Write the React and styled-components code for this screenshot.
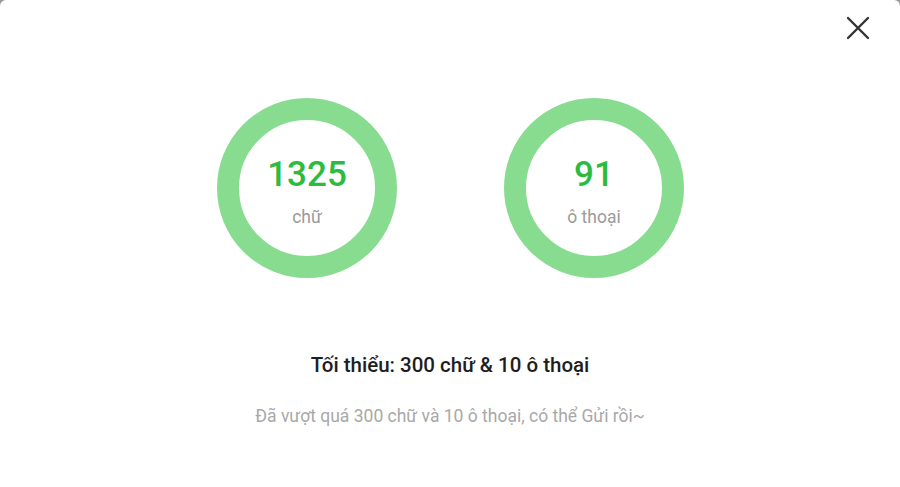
import React from "react";
import styled, { createGlobalStyle } from "styled-components";

const Global = createGlobalStyle`
  html, body { margin: 0; padding: 0; background: #9a9a9a; }
  body { font-family: Roboto, "Noto Sans", sans-serif; }
  #root { width: 900px; height: 487px; }
`;

const Modal = styled.div`
  position: relative;
  width: 900px;
  height: 487px;
  background: #fff;
  border-radius: 6px 6px 0 0;
  display: flex;
  flex-direction: column;
  align-items: center;
  box-sizing: border-box;
  padding-top: 98px;
`;

const CloseButton = styled.button`
  position: absolute;
  top: 15px;
  right: 29px;
  width: 26px;
  height: 26px;
  padding: 0;
  border: none;
  background: none;
  display: flex;
  align-items: center;
  justify-content: center;
  cursor: pointer;
`;

const Rings = styled.div`
  display: flex;
  gap: 107px;
  margin-left: 1px;
`;

const Ring = styled.div`
  width: 180px;
  height: 180px;
  box-sizing: border-box;
  border-radius: 50%;
  border: 22px solid #88dc8f;
  display: flex;
  flex-direction: column;
  align-items: center;
  justify-content: center;
`;

const Count = styled.div`
  font-size: 35px;
  font-weight: 500;
  color: #2dbb3f;
  line-height: 40px;
  margin-top: 6px;
`;

const Unit = styled.div`
  font-size: 17.5px;
  color: #9a9a9a;
  line-height: 20px;
  margin-top: 12px;
`;

const Title = styled.div`
  margin-top: 74px;
  font-size: 20.5px;
  font-weight: 500;
  color: #1e1e1e;
  line-height: 26px;
`;

const Hint = styled.div`
  margin-top: 27px;
  font-size: 17.5px;
  color: #a8a8a8;
  line-height: 22px;
`;

export default function App() {
  return (
    <>
      <Global />
      <Modal>
        <CloseButton aria-label="close">
          <svg width="24" height="24" viewBox="0 0 24 24">
            <path d="M2 2 L22 22 M22 2 L2 22" stroke="#333" strokeWidth="2.4" strokeLinecap="round" fill="none" />
          </svg>
        </CloseButton>
        <Rings>
          <Ring>
            <Count>1325</Count>
            <Unit>chữ</Unit>
          </Ring>
          <Ring>
            <Count>91</Count>
            <Unit>ô thoại</Unit>
          </Ring>
        </Rings>
        <Title>Tối thiểu: 300 chữ &amp; 10 ô thoại</Title>
        <Hint>Đã vượt quá 300 chữ và 10 ô thoại, có thể Gửi rồi~</Hint>
      </Modal>
    </>
  );
}
